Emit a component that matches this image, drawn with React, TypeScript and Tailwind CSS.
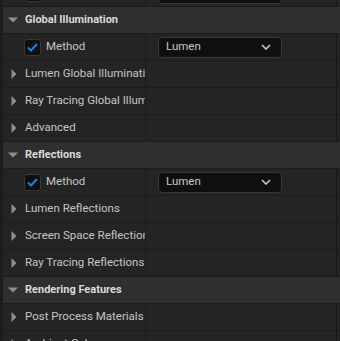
import { ReactNode } from "react";

const font = { fontFamily: "Roboto, 'Noto Sans', sans-serif" };

function Caret({ open }: { open?: boolean }) {
  if (open) {
    return (
      <svg className="w-[10px] h-[6px] shrink-0" viewBox="0 0 10 6">
        <path d="M0 0.5 H10 L5 5.5 Z" fill="#8f8f8f" />
      </svg>
    );
  }
  return (
    <svg className="w-[6px] h-[10px] shrink-0" viewBox="0 0 6 10">
      <path d="M0.5 0 V10 L5.5 5 Z" fill="#8f8f8f" />
    </svg>
  );
}

function Header({ label }: { label: string }) {
  return (
    <div className="h-[27px] flex items-center bg-[#2f2f2f] border-b border-[#1c1c1c] pl-[5px]">
      <Caret open />
      <span className="ml-[7px] text-[11px] font-bold text-[#dadada]">{label}</span>
    </div>
  );
}

function Row({ children, value }: { children: ReactNode; value?: ReactNode }) {
  return (
    <div className="h-[27px] flex border-b border-[#1c1c1c] bg-[#242424]">
      <div className="w-[142px] flex items-center overflow-hidden whitespace-nowrap shrink-0">
        {children}
      </div>
      <div className="w-px bg-[#1c1c1c]" />
      <div className="flex-1 flex items-center pl-[12px]">{value}</div>
      <div className="w-px bg-[#181818]" />
      <div className="w-[3px]" />
    </div>
  );
}

function Section({ label }: { label: string }) {
  return (
    <Row>
      <div className="pl-[8px] flex items-center">
        <Caret />
      </div>
      <span className="ml-[8px] text-[11.5px] text-[#c4c4c4]">{label}</span>
    </Row>
  );
}

function MethodRow({ partial }: { partial?: boolean }) {
  return (
    <Row
      value={
        <div className="w-[124px] h-[21px] rounded-[4px] bg-[#0f0f0f] border border-[#383838] flex items-center justify-between pl-[7px] pr-[10px]">
          <span className="text-[11.5px] text-[#c8c8c8]">{partial ? "" : "Lumen"}</span>
          <svg className="w-[10px] h-[6px]" viewBox="0 0 10 6">
            <path d="M1 1 L5 5 L9 1" stroke="#c8c8c8" strokeWidth="1.6" fill="none" />
          </svg>
        </div>
      }
    >
      <div className="ml-[21px] w-[17px] h-[17px] rounded-[3px] bg-[#0f0f0f] border border-[#383838] flex items-center justify-center">
        <svg className="w-[11px] h-[9px]" viewBox="0 0 11 9">
          <path d="M1 4.5 L4 7.5 L10 1" stroke="#1a80e6" strokeWidth="2" fill="none" />
        </svg>
      </div>
      {!partial && <span className="ml-[5px] text-[11.5px] text-[#c4c4c4]">Method</span>}
    </Row>
  );
}

export default function App() {
  return (
    <div className="w-[340px] h-[341px] overflow-hidden bg-[#1c1c1c] pl-[3px]" style={font}>
      <div className="-mt-[20px]">
        <MethodRow partial />
        <Header label="Global Illumination" />
        <MethodRow />
        <Section label="Lumen Global Illumination" />
        <Section label="Ray Tracing Global Illumination" />
        <Section label="Advanced" />
        <Header label="Reflections" />
        <MethodRow />
        <Section label="Lumen Reflections" />
        <Section label="Screen Space Reflections" />
        <Section label="Ray Tracing Reflections" />
        <Header label="Rendering Features" />
        <Section label="Post Process Materials" />
        <Section label="Ambient Cubemap" />
      </div>
    </div>
  );
}
